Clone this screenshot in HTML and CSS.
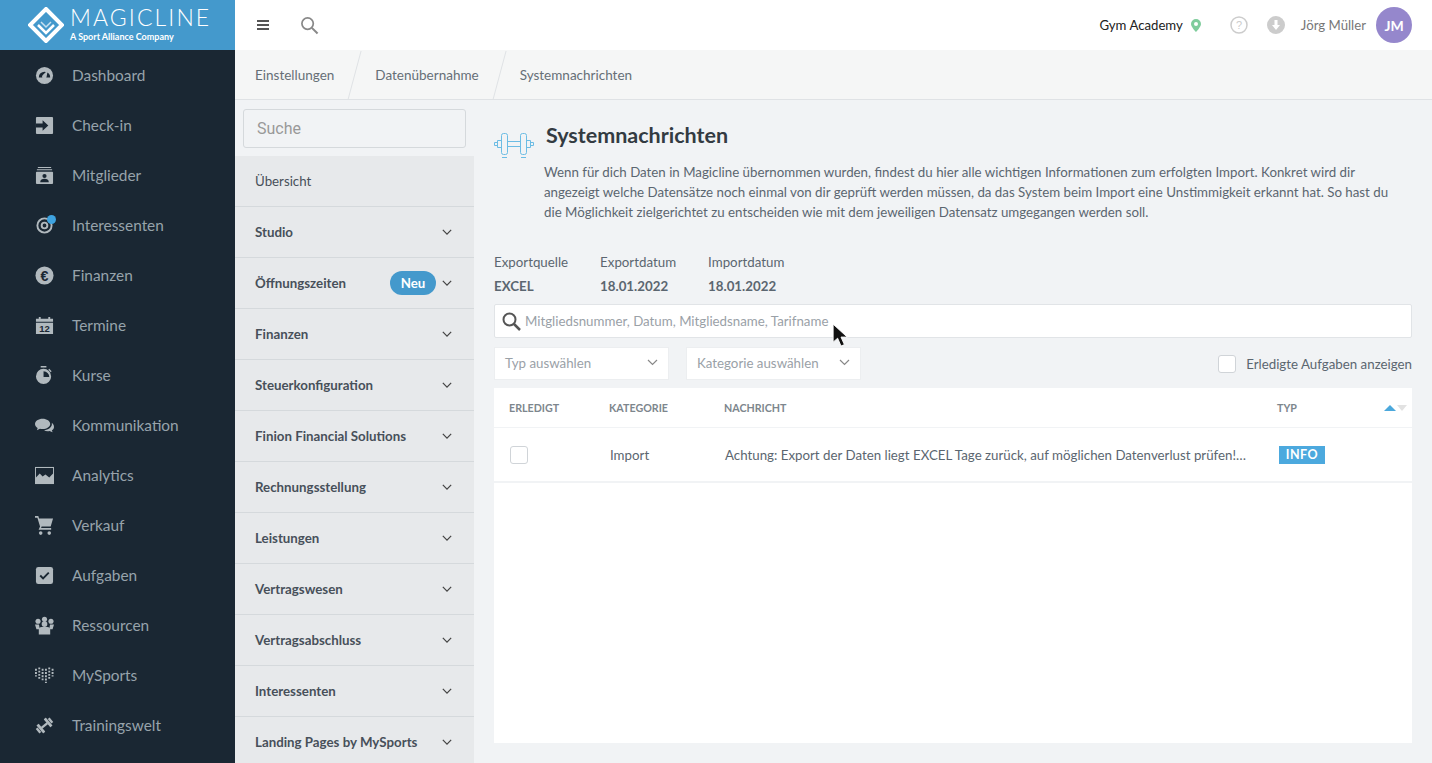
FILE: index.html
```html
<!DOCTYPE html>
<html lang="de">
<head>
    <meta charset="UTF-8">
    <meta name="viewport" content="width=device-width, initial-scale=1.0">
    <title>Systemnachrichten</title>
    <link rel="stylesheet" href="styles.css">
</head>
<body>
    <aside class="sidebar">
        <div class="logo">
            <svg class="logo-mark" width="36" height="36" viewBox="0 0 36 36">
                <path d="M18 2 L34 18 L18 34 L2 18 Z" fill="none" stroke="#fff" stroke-width="4"/>
                <path d="M10 18 L18 26 L26 18" fill="none" stroke="#fff" stroke-width="2.5"/>
                <path d="M13 15 L18 20 L23 15" fill="none" stroke="#fff" stroke-width="1.5" opacity="0.7"/>
            </svg>
            <div class="logo-text">
                <div class="logo-name">MAGICLINE</div>
                <div class="logo-sub">A Sport Alliance Company</div>
            </div>
        </div>
        <nav class="nav">
            <a class="nav-item">
                <svg class="nav-icon" viewBox="0 0 20 20"><circle cx="10" cy="10" r="9"/><path d="M4 12a6 6 0 0 1 12 0z" fill="#1a2733"/><path d="M13.500 4.500l-1.300 6.800a2.400 2.400 0 1 1-4-1.800z"/></svg>
                <span>Dashboard</span>
            </a>
            <a class="nav-item">
                <svg class="nav-icon" viewBox="0 0 20 20"><rect x="1" y="1" width="18" height="18" rx="1"/><path d="M1 8h7V4.500l6 5.500-6 5.500V12H1z" fill="#1a2733"/></svg>
                <span>Check-in</span>
            </a>
            <a class="nav-item">
                <svg class="nav-icon" viewBox="0 0 20 20"><path d="M3 1h14v1H3zM2 3.500h16v1H2z"/><rect x="1" y="6" width="18" height="13" rx="1"/><circle cx="10" cy="10.500" r="2.200" fill="#1a2733"/><path d="M5.500 17c0-2.500 2-3.500 4.500-3.500s4.500 1 4.500 3.500z" fill="#1a2733"/></svg>
                <span>Mitglieder</span>
            </a>
            <a class="nav-item">
                <svg class="nav-icon" viewBox="0 0 20 20"><path fill-rule="evenodd" d="M10 1.500a8.500 8.500 0 1 0 0 17 8.500 8.500 0 0 0 0-17zM10 3.500a6.500 6.500 0 1 1 0 13 6.500 6.500 0 0 1 0-13z"/><path fill-rule="evenodd" d="M10 6a4 4 0 1 0 0 8 4 4 0 0 0 0-8zM10 8a2 2 0 1 1 0 4 2 2 0 0 1 0-4z"/></svg>
                <span class="nav-dot"></span>
                <span>Interessenten</span>
            </a>
            <a class="nav-item">
                <svg class="nav-icon" viewBox="0 0 20 20"><circle cx="10" cy="10" r="9.500"/><text x="10" y="15.500" font-size="15" font-weight="700" font-family="Liberation Sans, sans-serif" text-anchor="middle" fill="#1a2733">€</text></svg>
                <span>Finanzen</span>
            </a>
            <a class="nav-item">
                <svg class="nav-icon" viewBox="0 0 20 20"><path d="M1 3h3V1h2v2h8V1h2v2h3v3H1zM1 7h18v12H1z"/><text x="10" y="17" font-size="10" font-weight="700" font-family="Liberation Sans, sans-serif" text-anchor="middle" fill="#1a2733">12</text></svg>
                <span>Termine</span>
            </a>
            <a class="nav-item">
                <svg class="nav-icon" viewBox="0 0 20 20"><path fill-rule="evenodd" d="M6 0h6v1.500H6zM9 3a8 8 0 1 0 0 16A8 8 0 0 0 9 3zM9 5.500v6h6a6 6 0 0 0-6-6z"/><path d="M15 3l2.500 2.500-1 1L14 4z"/></svg>
                <span>Kurse</span>
            </a>
            <a class="nav-item">
                <svg class="nav-icon" viewBox="0 0 20 20"><path d="M8 3C3.600 3 0 5.400 0 8.500c0 1.700 1.100 3.200 2.800 4.200L2 15l3.200-1.500c.9.200 1.800.3 2.800.3 4.400 0 8-2.400 8-5.300S12.400 3 8 3z"/><path d="M17.500 7.200c.2.400.3.900.3 1.300 0 3.500-3.700 6.200-8.300 6.400 1 .8 2.400 1.200 3.900 1.200.7 0 1.300-.1 1.900-.2L18.500 17l-.7-2c1.300-.8 2.200-2 2.200-3.500 0-1.800-1-3.300-2.500-4.300z"/></svg>
                <span>Kommunikation</span>
            </a>
            <a class="nav-item">
                <svg class="nav-icon" viewBox="0 0 20 20"><path d="M0 1h20v18H0z"/><path d="M1 2h18v6l-4 4-4-3-3 2-3-3-4 4z" fill="#1a2733"/></svg>
                <span>Analytics</span>
            </a>
            <a class="nav-item">
                <svg class="nav-icon" viewBox="0 0 20 20"><path d="M0 0h3.500l.8 2.500H19l-2.500 8.500H7l-.6 1.500H17V14.500H3.800l1.500-3.500L2.500 1.800H0z"/><circle cx="6" cy="18" r="1.900"/><circle cx="15" cy="18" r="1.900"/></svg>
                <span>Verkauf</span>
            </a>
            <a class="nav-item">
                <svg class="nav-icon" viewBox="0 0 20 20"><rect x="1" y="1" width="18" height="18" rx="2.500"/><path d="M5.500 10l3 3 6-6" fill="none" stroke="#1a2733" stroke-width="2"/></svg>
                <span>Aufgaben</span>
            </a>
            <a class="nav-item">
                <svg class="nav-icon" viewBox="0 0 20 20"><circle cx="3.200" cy="5.500" r="2.700"/><circle cx="16.800" cy="5.500" r="2.700"/><circle cx="10" cy="3.500" r="2.700"/><path d="M0 9h4.200L5 14H1.500zM20 9h-4.200L15 14h3.500z"/><circle cx="10" cy="8.500" r="3"/><path d="M4 19.500v-5q0-3 3-3h6q3 0 3 3v5z"/></svg>
                <span>Ressourcen</span>
            </a>
            <a class="nav-item">
                <svg class="nav-icon" viewBox="0 0 20 20"><path d="M1 3v8M4.500 1.500v12M8 3v12M11.500 3v15M15 1.500v12M18.500 3v8" fill="none" stroke="#b1b9be" stroke-width="2" stroke-dasharray="2 1.400"/></svg>
                <span>MySports</span>
            </a>
            <a class="nav-item">
                <svg class="nav-icon" viewBox="0 0 20 20"><g transform="rotate(-40 10 10)"><rect x="6" y="8.800" width="8" height="2.400"/><rect x="3.500" y="4.500" width="3" height="11" rx=".5"/><rect x="13.500" y="4.500" width="3" height="11" rx=".5"/><rect x=".5" y="7" width="2.500" height="6"/><rect x="17" y="7" width="2.500" height="6"/></g></svg>
                <span>Trainingswelt</span>
            </a>
        </nav>
    </aside>

    <div class="page">
        <header class="topbar">
            <svg class="menu-icon" width="12" height="10" viewBox="0 0 12 10"><path d="M0 0h12v2H0zM0 4h12v2H0zM0 8h12v2H0z" fill="#555"/></svg>
            <svg class="top-search" width="19" height="19" viewBox="0 0 20 20"><circle cx="8" cy="8" r="6" fill="none" stroke="#888" stroke-width="1.800"/><path d="M12.500 12.500L18.500 18.500" stroke="#888" stroke-width="2.200"/></svg>
            <div class="topbar-right">
                <span class="studio">Gym Academy</span>
                <svg class="pin" width="10" height="13" viewBox="0 0 10 13"><path fill-rule="evenodd" d="M5 0a5 5 0 0 0-5 5c0 3 5 8 5 8s5-5 5-8a5 5 0 0 0-5-5zM5 3a2 2 0 1 1 0 4 2 2 0 0 1 0-4z" fill="#7fcc9c"/></svg>
                <svg class="help" width="18" height="18" viewBox="0 0 18 18"><circle cx="9" cy="9" r="8" fill="none" stroke="#ccc" stroke-width="1.500"/><text x="9" y="13" font-size="11" font-family="Liberation Sans, sans-serif" text-anchor="middle" fill="#ccc">?</text></svg>
                <svg class="download" width="18" height="18" viewBox="0 0 18 18"><circle cx="9" cy="9" r="9" fill="#ccc"/><path d="M7.500 4h3v5h2.500L9 14 5 9h2.500z" fill="#fff"/></svg>
                <span class="username">Jörg Müller</span>
                <span class="avatar">JM</span>
            </div>
        </header>

        <div class="breadcrumb">
            <span class="crumb">Einstellungen</span>
            <span class="crumb">Datenübernahme</span>
            <span class="crumb">Systemnachrichten</span>
        </div>

        <div class="columns">
            <div class="settings">
                <div class="settings-search">
                    <input class="search-input" type="text" placeholder="Suche">
                </div>
                <div class="settings-row plain">Übersicht</div>
                <div class="settings-row">Studio<svg class="chev" width="10" height="6" viewBox="0 0 12 7"><path d="M1 1l5 5 5-5" fill="none" stroke="#444" stroke-width="1.500"/></svg></div>
                <div class="settings-row">Öffnungszeiten<span class="badge-new">Neu</span><svg class="chev" width="10" height="6" viewBox="0 0 12 7"><path d="M1 1l5 5 5-5" fill="none" stroke="#444" stroke-width="1.500"/></svg></div>
                <div class="settings-row">Finanzen<svg class="chev" width="10" height="6" viewBox="0 0 12 7"><path d="M1 1l5 5 5-5" fill="none" stroke="#444" stroke-width="1.500"/></svg></div>
                <div class="settings-row">Steuerkonfiguration<svg class="chev" width="10" height="6" viewBox="0 0 12 7"><path d="M1 1l5 5 5-5" fill="none" stroke="#444" stroke-width="1.500"/></svg></div>
                <div class="settings-row">Finion Financial Solutions<svg class="chev" width="10" height="6" viewBox="0 0 12 7"><path d="M1 1l5 5 5-5" fill="none" stroke="#444" stroke-width="1.500"/></svg></div>
                <div class="settings-row">Rechnungsstellung<svg class="chev" width="10" height="6" viewBox="0 0 12 7"><path d="M1 1l5 5 5-5" fill="none" stroke="#444" stroke-width="1.500"/></svg></div>
                <div class="settings-row">Leistungen<svg class="chev" width="10" height="6" viewBox="0 0 12 7"><path d="M1 1l5 5 5-5" fill="none" stroke="#444" stroke-width="1.500"/></svg></div>
                <div class="settings-row">Vertragswesen<svg class="chev" width="10" height="6" viewBox="0 0 12 7"><path d="M1 1l5 5 5-5" fill="none" stroke="#444" stroke-width="1.500"/></svg></div>
                <div class="settings-row">Vertragsabschluss<svg class="chev" width="10" height="6" viewBox="0 0 12 7"><path d="M1 1l5 5 5-5" fill="none" stroke="#444" stroke-width="1.500"/></svg></div>
                <div class="settings-row">Interessenten<svg class="chev" width="10" height="6" viewBox="0 0 12 7"><path d="M1 1l5 5 5-5" fill="none" stroke="#444" stroke-width="1.500"/></svg></div>
                <div class="settings-row">Landing Pages by MySports<svg class="chev" width="10" height="6" viewBox="0 0 12 7"><path d="M1 1l5 5 5-5" fill="none" stroke="#444" stroke-width="1.500"/></svg></div>
            </div>

            <main class="content">
                <div class="title-row">
                    <svg class="title-icon" width="40" height="28" viewBox="0 0 40 28">
                        <g fill="none" stroke="#6cbce4" stroke-width="1">
                            <rect x="7.500" y="2.500" width="6" height="21" rx="2"/>
                            <rect x="26.500" y="2.500" width="6" height="21" rx="2"/>
                            <path d="M3.500 9.500h4v7h-4zM32.500 9.500h4v7h-4zM.5 11.500h3v3h-3zM36.500 11.500h3v3h-3z"/>
                            <path d="M13.500 10.500h13M13.500 15.500h13M8 26.500h5M27 26.500h5"/>
                        </g>
                    </svg>
                    <div class="title-text">
                        <h1>Systemnachrichten</h1>
                        <p>Wenn für dich Daten in Magicline übernommen wurden, findest du hier alle wichtigen Informationen zum erfolgten Import. Konkret wird dir angezeigt welche Datensätze noch einmal von dir geprüft werden müssen, da das System beim Import eine Unstimmigkeit erkannt hat. So hast du die Möglichkeit zielgerichtet zu entscheiden wie mit dem jeweiligen Datensatz umgegangen werden soll.</p>
                    </div>
                </div>

                <div class="meta">
                    <div><div class="meta-label">Exportquelle</div><div class="meta-value">EXCEL</div></div>
                    <div><div class="meta-label">Exportdatum</div><div class="meta-value">18.01.2022</div></div>
                    <div><div class="meta-label">Importdatum</div><div class="meta-value">18.01.2022</div></div>
                </div>

                <div class="search-box">
                    <svg width="19" height="19" viewBox="0 0 19 19"><circle cx="7.500" cy="7.500" r="6" fill="none" stroke="#555" stroke-width="2"/><path d="M12 12l6 6" stroke="#555" stroke-width="2.500"/></svg>
                    <span class="search-hint">Mitgliedsnummer, Datum, Mitgliedsname, Tarifname</span>
                </div>

                <div class="filters">
                    <div class="select type">Typ auswählen<svg width="11" height="7" viewBox="0 0 11 7"><path d="M1 1l4.500 4.500L10 1" fill="none" stroke="#888" stroke-width="1.200"/></svg></div>
                    <div class="select category">Kategorie auswählen<svg width="11" height="7" viewBox="0 0 11 7"><path d="M1 1l4.500 4.500L10 1" fill="none" stroke="#888" stroke-width="1.200"/></svg></div>
                    <label class="done-toggle"><span class="checkbox"></span>Erledigte Aufgaben anzeigen</label>
                </div>

                <div class="table">
                    <div class="table-row table-head">
                        <span class="col-done">ERLEDIGT</span>
                        <span class="col-cat">KATEGORIE</span>
                        <span class="col-msg">NACHRICHT</span>
                        <span class="col-type">TYP</span>
                        <svg class="sort" width="23" height="6" viewBox="0 0 23 6"><path d="M0 6l6-6 6 6z" fill="#4ba8dc"/><path d="M13 0h10l-5 6z" fill="#e2e2e2"/></svg>
                    </div>
                    <div class="table-row table-body">
                        <span class="col-done"><span class="checkbox"></span></span>
                        <span class="col-cat">Import</span>
                        <span class="col-msg">Achtung: Export der Daten liegt EXCEL Tage zurück, auf möglichen Datenverlust prüfen!…</span>
                        <span class="col-type"><span class="tag-info">INFO</span></span>
                    </div>
                </div>
            </main>
        </div>
    </div>

    <svg class="cursor" width="18" height="27" viewBox="0 0 16 24"><path d="M1 1l0 16 4-3.500 3 7 3-1.300-3-6.700h5.500z" fill="#111" stroke="#fff" stroke-width="0.800"/></svg>
</body>
</html>
```

FILE: styles.css
```css
* {
    box-sizing: border-box;
}

html, body {
    height: 100%;
}

body {
    margin: 0;
    display: flex;
    height: 100vh;
    overflow: hidden;
    font-family: Lato, "Noto Sans", sans-serif;
    font-size: 13.300px;
    color: #5b6670;
    background-color: #f1f3f5;
}

/* left navigation */
.sidebar {
    width: 235px;
    flex-shrink: 0;
    background-color: #1a2733;
    overflow: hidden;
}

.logo {
    height: 50px;
    display: flex;
    align-items: center;
    gap: 6px;
    padding-left: 28px;
    background-color: #4499cc;
    color: white;
}

.logo-name {
    font-size: 23px;
    font-weight: 300;
    letter-spacing: 2.100px;
    line-height: 24px;
    margin-top: -3px;
}

.logo-sub {
    font-size: 9px;
    font-weight: 700;
    line-height: 10px;
    margin-top: 3px;
}

.nav-item {
    position: relative;
    height: 50px;
    display: flex;
    align-items: center;
    gap: 18px;
    padding-left: 35px;
    font-size: 15.400px;
    color: #97a3ab;
}

.nav-icon {
    width: 19px;
    height: 19px;
    fill: #b1b9be;
    flex-shrink: 0;
}

.nav-dot {
    position: absolute;
    left: 47px;
    top: 15px;
    width: 9px;
    height: 9px;
    border-radius: 50%;
    background-color: #3ea3e0;
}

/* right side */
.page {
    flex: 1;
    min-width: 0;
    display: flex;
    flex-direction: column;
}

.topbar {
    height: 50px;
    flex-shrink: 0;
    display: flex;
    align-items: center;
    padding: 0 20px 0 22px;
    background-color: white;
}

.top-search {
    margin-left: 31px;
}

.topbar-right {
    margin-left: auto;
    display: flex;
    align-items: center;
}

.studio {
    color: #222;
    font-size: 13.200px;
}

.pin {
    margin-left: 8px;
}

.help {
    margin-left: 29px;
}

.download {
    margin-left: 19px;
}

.username {
    margin-left: 16px;
    font-size: 13.200px;
    color: #777;
}

.avatar {
    margin-left: 10px;
    width: 36px;
    height: 36px;
    border-radius: 50%;
    display: flex;
    align-items: center;
    justify-content: center;
    background-color: #9587cc;
    color: white;
    font-weight: 700;
    font-size: 14px;
}

.breadcrumb {
    height: 50px;
    flex-shrink: 0;
    display: flex;
    align-items: center;
    background-color: #f5f6f6;
    border-bottom: 1px solid #dfe2e5;
    padding-left: 20px;
    font-size: 13.500px;
    color: #666f76;
}

.crumb {
    position: relative;
    margin-right: 41px;
}

.crumb:not(:last-child)::after {
    content: "";
    position: absolute;
    right: -21px;
    top: -16px;
    height: 49px;
    width: 1px;
    background-color: #dfe2e5;
    transform: skewX(-15deg);
}

.columns {
    flex: 1;
    min-height: 0;
    display: flex;
}

/* settings list */
.settings {
    width: 239px;
    flex-shrink: 0;
    overflow: hidden;
}

.settings-search {
    padding: 9px 8px 8px;
}

.search-input {
    display: block;
    width: 100%;
    height: 39px;
    padding: 0 13px;
    background-color: #f1f3f5;
    border: 1px solid #d5d9dc;
    border-radius: 3px;
    font-family: Roboto, sans-serif;
    font-size: 16px;
}

.search-input::placeholder {
    color: #999;
}

.settings-row {
    height: 51px;
    display: flex;
    align-items: center;
    padding: 0 22px 0 20px;
    background-color: #e7e9eb;
    border-bottom: 1px solid #d5d9dc;
    font-size: 13.300px;
    font-weight: 700;
    color: #47505a;
}

.settings-row.plain {
    font-weight: 400;
}

.chev {
    margin-left: auto;
}

.badge-new {
    margin-left: auto;
    width: 46px;
    height: 24px;
    line-height: 24px;
    text-align: center;
    border-radius: 12px;
    background-color: #4499cc;
    color: white;
}

.badge-new + .chev {
    margin-left: 6px;
}

/* main content */
.content {
    flex: 1;
    min-width: 0;
    display: flex;
    flex-direction: column;
    padding: 21px 20px 20px;
}

.title-row {
    display: flex;
    align-items: flex-start;
    gap: 10px;
}

.title-icon {
    margin-top: 10px;
    flex-shrink: 0;
}

h1 {
    margin: 0 0 0 2px;
    font-size: 21.500px;
    line-height: 28px;
    font-weight: 700;
    color: #333b42;
}

.title-text p {
    margin: 13px 0 0;
    max-width: 858px;
    line-height: 20px;
}

.meta {
    display: flex;
    gap: 32px;
    margin-top: 28px;
    line-height: 24px;
}

.meta-value {
    font-weight: 700;
}

.search-box {
    height: 34px;
    flex-shrink: 0;
    margin-top: 6px;
    display: flex;
    align-items: center;
    gap: 4px;
    padding-left: 7px;
    background-color: white;
    border: 1px solid #e1e4e7;
    border-radius: 2px;
}

.search-hint {
    color: #9aa1a7;
}

.filters {
    display: flex;
    align-items: center;
    margin-top: 9px;
    height: 33px;
    flex-shrink: 0;
}

.select {
    height: 33px;
    display: flex;
    align-items: center;
    justify-content: space-between;
    padding: 0 10px 2px;
    background-color: white;
    border: 1px solid #eceef0;
    color: #9aa1a7;
}

.select.type {
    width: 175px;
}

.select.category {
    width: 175px;
    margin-left: 17px;
}

.done-toggle {
    margin-left: auto;
    display: flex;
    align-items: center;
    gap: 10px;
}

.checkbox {
    display: block;
    width: 18px;
    height: 18px;
    background-color: white;
    border: 1px solid #d0d4d8;
    border-radius: 3px;
}

.table {
    flex: 1;
    margin-top: 8px;
    background-color: white;
}

.table-row {
    position: relative;
    display: flex;
    align-items: center;
    border-bottom: 1px solid #f1f3f5;
}

.table-head {
    height: 40px;
    font-size: 10.700px;
    font-weight: 700;
    color: #7d868d;
}

.table-body {
    height: 55px;
    border-bottom-width: 2px;
}

.col-done {
    width: 115px;
    padding-left: 15px;
}

.table-body .col-done {
    padding-left: 16px;
    width: 115px;
}

.col-cat {
    width: 115px;
}

.col-msg {
    width: 553px;
    white-space: nowrap;
}

.table-body .col-cat,
.table-body .col-msg {
    padding-left: 1px;
}

.sort {
    position: absolute;
    right: 5px;
    top: 17px;
}

.tag-info {
    display: block;
    margin-left: 2px;
    width: 46px;
    height: 18px;
    line-height: 18px;
    text-align: center;
    background-color: #4ca9de;
    color: white;
    font-size: 12.500px;
    font-weight: 700;
    letter-spacing: 0.5px;
}

.cursor {
    position: absolute;
    left: 832px;
    top: 323px;
}
```
